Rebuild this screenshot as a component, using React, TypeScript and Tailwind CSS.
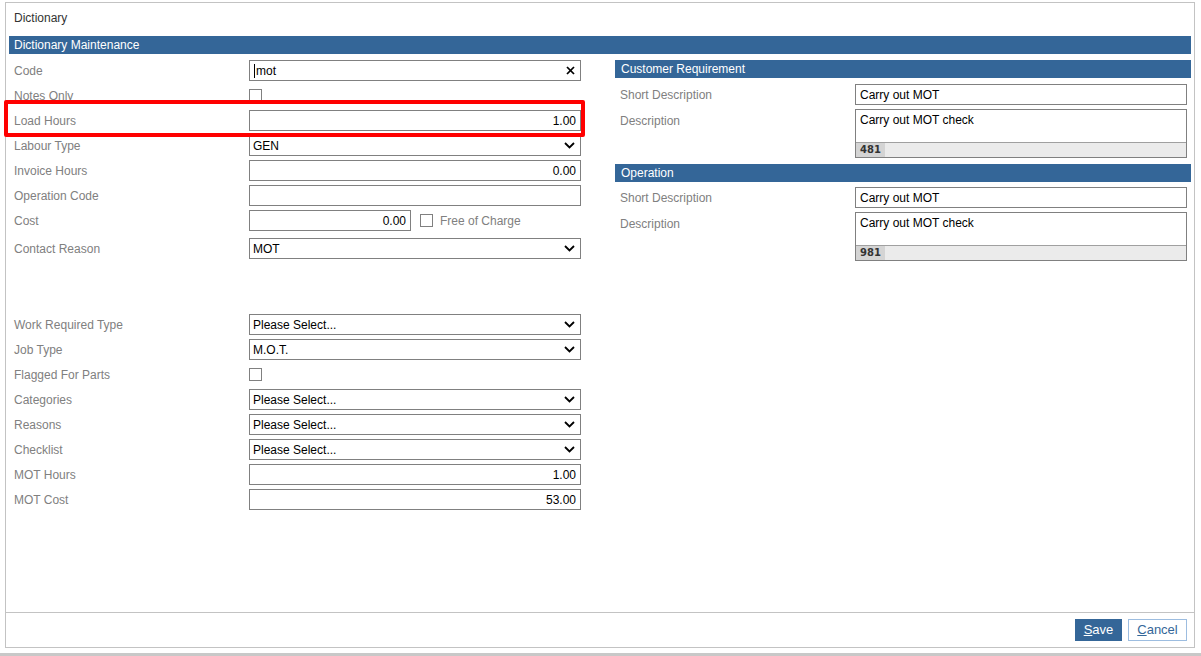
import React from "react";

const Chevron = () => (
  <svg width="11" height="7" viewBox="0 0 11 7" className="shrink-0">
    <polyline points="1,1 5.5,5.5 10,1" fill="none" stroke="#000" strokeWidth="1.8" />
  </svg>
);

const ClearX = () => (
  <svg width="9" height="9" viewBox="0 0 9 9" className="shrink-0">
    <line x1="1" y1="1" x2="8" y2="8" stroke="#000" strokeWidth="1.7" />
    <line x1="8" y1="1" x2="1" y2="8" stroke="#000" strokeWidth="1.7" />
  </svg>
);

const Checkbox = () => <div className="h-[13px] w-[13px] border border-[#808080] bg-white" />;

function TextBox({ value = "", right = false, width = "w-[332px]" }: { value?: string; right?: boolean; width?: string }) {
  return (
    <div
      className={`flex h-[21px] ${width} items-center border border-[#808080] bg-white px-[4px] pt-[1px] text-black ${
        right ? "justify-end" : "justify-start"
      }`}
    >
      {value}
    </div>
  );
}

function Select({ value }: { value: string }) {
  return (
    <div className="flex h-[21px] w-[332px] items-center justify-between border border-[#808080] bg-white pl-[3px] pr-[5px] text-black">
      <span className="pt-[1px]">{value}</span>
      <Chevron />
    </div>
  );
}

function Row({ label, children, className = "" }: { label: string; children?: React.ReactNode; className?: string }) {
  return (
    <div className={`flex h-[21px] items-center ${className}`}>
      <div className="w-[240px] pl-[5px] pt-[1px] text-[#808080]">{label}</div>
      {children}
    </div>
  );
}

function DescBlock({ short, long, count }: { short: string; long: string; count: string }) {
  return (
    <div className="flex flex-col gap-[4px]">
      <div className="flex h-[21px] items-center">
        <div className="w-[240px] pl-[5px] pt-[1px] text-[#808080]">Short Description</div>
        <TextBox value={short} />
      </div>
      <div className="flex">
        <div className="w-[240px] pl-[5px] pt-[4px] text-[#808080]">Description</div>
        <div className="flex h-[49px] w-[332px] flex-col border border-[#808080] bg-white">
          <div className="flex-1 px-[4px] pt-[2px] leading-[16px] text-black">{long}</div>
          <div className="flex h-[15px] border-t border-[#a0a0a0] bg-[#ebebeb]">
            <div className="flex w-[29px] items-center bg-[#d4d4d4] pl-[4px] font-['DejaVu_Sans',sans-serif] text-[10px] font-bold text-[#333]">
              {count}
            </div>
          </div>
        </div>
      </div>
    </div>
  );
}

export default function App() {
  return (
    <div className="relative h-[656px] w-[1201px] overflow-hidden bg-white font-['Liberation_Sans',Arial,sans-serif] text-[12px] leading-[16px]">
      <div className="pl-[5px] pt-[2px]">
        <div className="flex h-[646px] w-[1190px] flex-col border border-[#c3c3c3]">
          {/* title */}
          <div className="h-[33px] pl-[8px] pt-[7px] text-[#333]">Dictionary</div>

          <div className="mx-[3px] h-[18px] bg-[#346698] pl-[5px] pt-[1px] leading-[17px] text-white">Dictionary Maintenance</div>

          <div className="flex flex-1 px-[3px]">
            {/* left column */}
            <div className="mt-[6px] flex w-[572px] flex-col gap-[4px]">
              <Row label="Code">
                <div className="flex h-[21px] w-[332px] items-center justify-between border border-[#808080] bg-white pl-[4px] pr-[5px] text-black">
                  <span className="flex items-center pt-[1px]">
                    <span className="mr-[1px] h-[14px] w-px bg-black" />
                    mot
                  </span>
                  <ClearX />
                </div>
              </Row>
              <Row label="Notes Only">
                <Checkbox />
              </Row>
              <Row label="Load Hours">
                <TextBox value="1.00" right />
              </Row>
              <Row label="Labour Type">
                <Select value="GEN" />
              </Row>
              <Row label="Invoice Hours">
                <TextBox value="0.00" right />
              </Row>
              <Row label="Operation Code">
                <TextBox />
              </Row>
              <Row label="Cost">
                <TextBox value="0.00" right width="w-[162px]" />
                <div className="ml-[9px]">
                  <Checkbox />
                </div>
                <span className="ml-[7px] pt-[1px] text-[#808080]">Free of Charge</span>
              </Row>
              <Row label="Contact Reason" className="mt-[3px]">
                <Select value="MOT" />
              </Row>
              <Row label="Work Required Type" className="mt-[51px]">
                <Select value="Please Select..." />
              </Row>
              <Row label="Job Type">
                <Select value="M.O.T." />
              </Row>
              <Row label="Flagged For Parts">
                <Checkbox />
              </Row>
              <Row label="Categories">
                <Select value="Please Select..." />
              </Row>
              <Row label="Reasons">
                <Select value="Please Select..." />
              </Row>
              <Row label="Checklist">
                <Select value="Please Select..." />
              </Row>
              <Row label="MOT Hours">
                <TextBox value="1.00" right />
              </Row>
              <Row label="MOT Cost">
                <TextBox value="53.00" right />
              </Row>
            </div>

            {/* right column */}
            <div className="ml-[34px] mt-[6px] flex w-[577px] flex-col">
              <div className="h-[18px] bg-[#346698] pl-[6px] pt-[1px] leading-[17px] text-white">Customer Requirement</div>
              <div className="mt-[6px]">
                <DescBlock short="Carry out MOT" long="Carry out MOT check" count="481" />
              </div>
              <div className="mt-[6px] h-[18px] bg-[#346698] pl-[6px] pt-[1px] leading-[17px] text-white">Operation</div>
              <div className="mt-[5px]">
                <DescBlock short="Carry out MOT" long="Carry out MOT check" count="981" />
              </div>
            </div>
          </div>

          {/* footer */}
          <div className="flex h-[35px] justify-end gap-[6px] border-t border-[#c3c3c3] pr-[7px] pt-[6px]">
            <button className="flex h-[22px] w-[47px] items-center justify-center bg-[#346698] text-[13px] text-white">
              <span className="underline">S</span>ave
            </button>
            <button className="flex h-[22px] w-[59px] items-center justify-center border border-[#9dbde0] bg-white text-[13px] text-[#346698]">
              <span className="underline">C</span>ancel
            </button>
          </div>
        </div>
      </div>
      <div className="mt-[5px] h-[3px] w-full bg-[#c8c8c8]" />

      {/* red annotation */}
      <div className="pointer-events-none absolute left-[4px] top-[100px] h-[37px] w-[581px] rounded-[2px] border-4 border-[#ff0000]" />
    </div>
  );
}
